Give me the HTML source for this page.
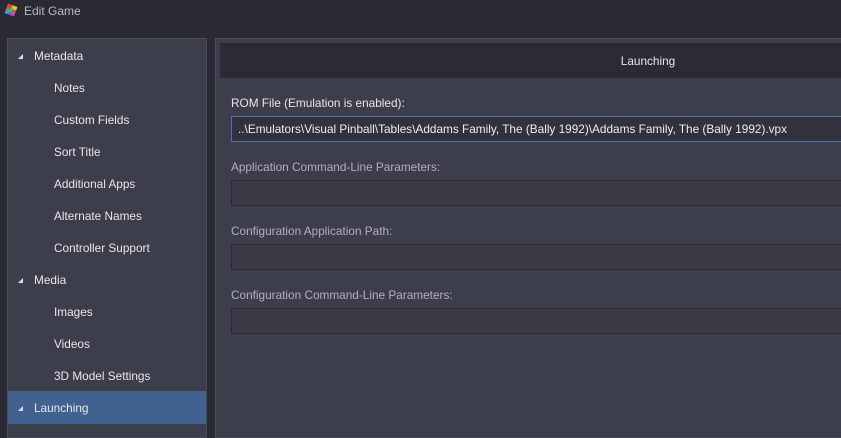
<!DOCTYPE html>
<html><head><meta charset="utf-8"><style>
*{margin:0;padding:0;box-sizing:border-box}
body{width:841px;height:433px;background:#292a33;font-family:"Liberation Sans",sans-serif;font-size:11.8px;color:#e6e6ea;position:relative;overflow:hidden}
.title{position:absolute;left:24px;top:4px;color:#b9b9c2;font-size:12px}
.left{position:absolute;left:7px;top:38px;width:200px;height:400px;background:#3d3e4b;border:1px solid #4a4b58}
.item{position:absolute;height:33px;line-height:33px;left:0;right:0}
.item.top{padding-left:26px}
.item.sub{padding-left:46px}
.tri{position:absolute;left:10px;top:14px;width:0;height:0;border-left:5px solid transparent;border-bottom:5px solid #ddd}
.sel{background:#41618f}
.right{position:absolute;left:215px;top:38px;width:900px;height:400px;background:#3d3e4b;border:1px solid #4a4b58}
.hdr{position:absolute;left:4px;top:4px;width:856px;height:35px;background:#2b2b35;text-align:center;line-height:37px}
.lbl{position:absolute;left:15px;color:#e6e6ea}
.lbl.dim{color:#b0b0ba}
.inp{position:absolute;left:15px;width:640px;height:26px;background:#3a3b47;border:1px solid #2a2b33}
.inp.act{background:#31323d;border-color:#4f74ad;padding-left:6px;line-height:24px;color:#eee}
</style></head><body>
<svg style="position:absolute;left:4px;top:3px" width="14" height="14" viewBox="0 0 14 14">
<g transform="rotate(20 7 7)">
<rect x="2" y="2" width="10" height="10" fill="#7b3fd1"/>
<rect x="2" y="2" width="5" height="5" fill="#e8452c"/>
<rect x="7" y="2" width="5" height="4" fill="#f2c21b"/>
<rect x="2" y="7" width="4" height="5" fill="#2ea7e0"/>
<rect x="7" y="7" width="5" height="5" fill="#d33fa8"/>
<rect x="5" y="5" width="4" height="4" fill="#3fbf4f"/>
</g></svg>
<div class="title">Edit Game</div>
<div class="left">
<div class="item top" style="top:1px"><span class="tri"></span>Metadata</div>
<div class="item sub" style="top:33px">Notes</div>
<div class="item sub" style="top:65px">Custom Fields</div>
<div class="item sub" style="top:97px">Sort Title</div>
<div class="item sub" style="top:129px">Additional Apps</div>
<div class="item sub" style="top:161px">Alternate Names</div>
<div class="item sub" style="top:193px">Controller Support</div>
<div class="item top" style="top:225px"><span class="tri"></span>Media</div>
<div class="item sub" style="top:257px">Images</div>
<div class="item sub" style="top:289px">Videos</div>
<div class="item sub" style="top:321px">3D Model Settings</div>
<div class="item top sel" style="top:352px;line-height:35px"><span class="tri" style="top:15px"></span>Launching</div>
</div>
<div class="right">
<div class="hdr">Launching</div>
<div class="lbl" style="top:57px">ROM File (Emulation is enabled):</div>
<div class="inp act" style="top:77px">..\Emulators\Visual Pinball\Tables\Addams Family, The (Bally 1992)\Addams Family, The (Bally 1992).vpx</div>
<div class="lbl dim" style="top:121px">Application Command-Line Parameters:</div>
<div class="inp" style="top:141px"></div>
<div class="lbl dim" style="top:185px">Configuration Application Path:</div>
<div class="inp" style="top:205px"></div>
<div class="lbl dim" style="top:249px">Configuration Command-Line Parameters:</div>
<div class="inp" style="top:269px"></div>
</div>
</body></html>
